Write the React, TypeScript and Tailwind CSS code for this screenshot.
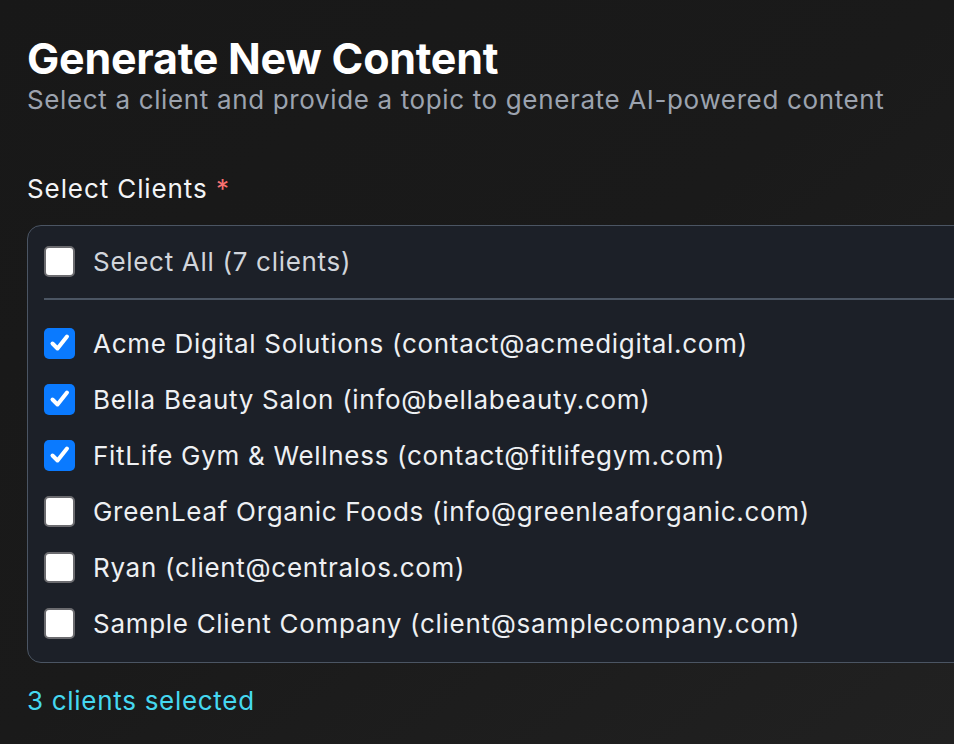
import React from "react";

const clients = [
  { name: "Acme Digital Solutions", email: "contact@acmedigital.com", checked: true },
  { name: "Bella Beauty Salon", email: "info@bellabeauty.com", checked: true },
  { name: "FitLife Gym & Wellness", email: "contact@fitlifegym.com", checked: true },
  { name: "GreenLeaf Organic Foods", email: "info@greenleaforganic.com", checked: false },
  { name: "Ryan", email: "client@centralos.com", checked: false },
  { name: "Sample Client Company", email: "client@samplecompany.com", checked: false },
];

function Box({ checked }: { checked: boolean }) {
  if (checked) {
    return (
      <span className="flex h-[31px] w-[31px] shrink-0 items-center justify-center rounded-[5px] bg-[#0a7aff]">
        <svg width="24" height="24" viewBox="0 0 24 24" fill="none">
          <path d="M4.5 12.5 L9.5 17.5 L19 5.5" stroke="white" strokeWidth="4" strokeLinecap="round" strokeLinejoin="round" />
        </svg>
      </span>
    );
  }
  return <span className="h-[31px] w-[31px] shrink-0 rounded-[5px] border-2 border-[#6b6b6f] bg-white" />;
}

export default function App() {
  return (
    <div
      className="min-h-screen w-full overflow-hidden bg-gradient-to-br from-[#181818] via-[#1a1a1a] to-[#212121] text-white"
      style={{ fontFamily: "Inter, 'Noto Sans', sans-serif" }}
    >
      <div className="pl-[27px] pt-[33px]">
        <h1 className="text-[43px] font-bold leading-[50px] tracking-[-0.25px] text-white">Generate New Content</h1>
        <p className="text-[26px] leading-[34px] tracking-[0.64px] text-[#9ca3af]">
          Select a client and provide a topic to generate AI-powered content
        </p>
        <div className="mt-[55px] text-[26px] leading-[34px] tracking-[0.9px] text-[#f3f4f6]">
          Select Clients <span className="text-[#f87171]">*</span>
        </div>
        <div className="mt-[19px] w-[1000px] rounded-[14px] border-[1.5px] border-[#4b5563] bg-[#1c2028] pb-[23px] pl-[16px] pt-[20px]">
          <label className="flex items-center gap-[18px]">
            <Box checked={false} />
            <span className="text-[26px] leading-[31px] tracking-[0.7px] text-[#d1d5db]">Select All (7 clients)</span>
          </label>
          <div className="mt-[21px] h-[1.5px] bg-[#4b5563]" />
          <div className="mt-[28px] flex flex-col gap-[25px]">
            {clients.map((c) => (
              <label key={c.name} className="flex items-center gap-[18px]">
                <Box checked={c.checked} />
                <span className="text-[26px] leading-[31px] tracking-[0.7px] text-[#eef0f3]">
                  {c.name} ({c.email})
                </span>
              </label>
            ))}
          </div>
        </div>
        <div className="mt-[21px] text-[26px] leading-[34px] tracking-[0.7px] text-[#45d8f0]">3 clients selected</div>
      </div>
    </div>
  );
}
